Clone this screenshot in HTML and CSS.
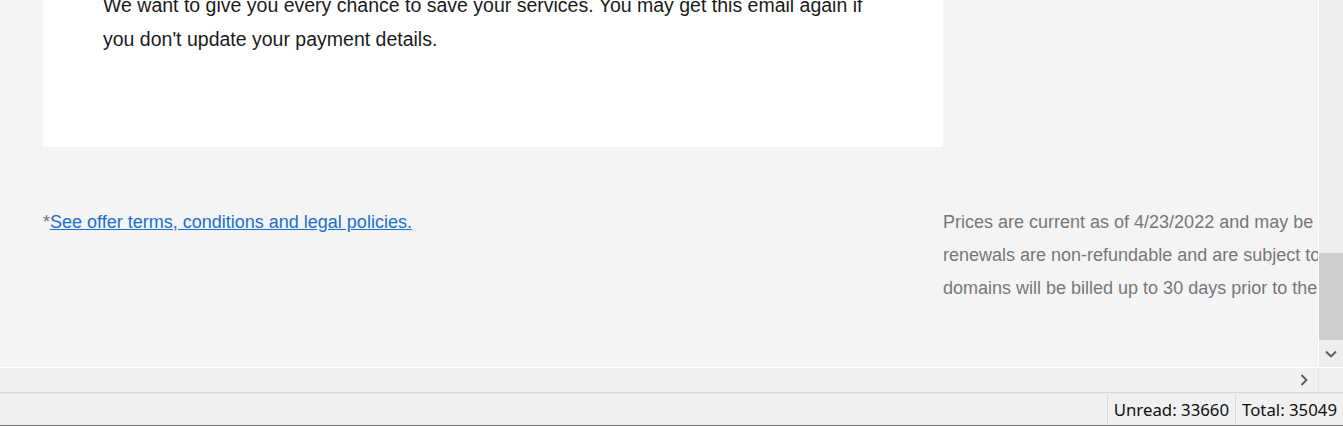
FILE: index.html
```html
<!DOCTYPE html>
<html lang="en">
<head>
    <meta charset="UTF-8">
    <meta name="viewport" content="width=device-width, initial-scale=1.0">
    <title>Payment reminder</title>
    <link rel="stylesheet" href="styles.css">
</head>
<body>
    <div class="window">
        <div class="reading">
            <div class="viewport">
                <div class="mail">
                    <div class="card">
                        <p>We want to give you every chance to save your services. You may get this email again if you don't update your payment details.</p>
                    </div>
                    <div class="footer">
                        <div class="terms">
                            <span class="star">*</span><a href="#">See offer terms, conditions and legal policies.</a>
                        </div>
                        <div class="legal">
                            <p>Prices are current as of 4/23/2022 and may be subject to change. Product<br>renewals are non-refundable and are subject to the terms in effect at renewal. Auto-renewing<br>domains will be billed up to 30 days prior to the expiration date.</p>
                        </div>
                    </div>
                </div>
            </div>
            <div class="vscroll">
                <div class="vtrack">
                    <div class="thumb"></div>
                </div>
                <div class="vbtn">
                    <svg width="12" height="8" viewBox="0 0 12 8"><path d="M1 1.5 L6 6.5 L11 1.5" fill="none" stroke="#5a5a5a" stroke-width="1.8"/></svg>
                </div>
            </div>
        </div>
        <div class="hscroll">
            <div class="htrack">
                <svg width="8" height="12" viewBox="0 0 8 12"><path d="M1.5 1 L6.5 6 L1.5 11" fill="none" stroke="#5a5a5a" stroke-width="1.8"/></svg>
            </div>
            <div class="corner"></div>
        </div>
        <div class="status">
            <div class="cell">Unread: 33660</div>
            <div class="cell">Total: 35049</div>
        </div>
    </div>
</body>
</html>
```

FILE: styles.css
```css
html, body {
    margin: 0;
    height: 100%;
}

body {
    font-family: 'Liberation Sans', Arial, sans-serif;
    background: #f0f0f0;
    overflow: hidden;
}

.window {
    display: flex;
    flex-direction: column;
    height: 426px;
}

.reading {
    display: flex;
    height: 367px;
}

.viewport {
    flex: 1;
    background: #f4f4f4;
    overflow: hidden;
    border-right: 1px solid #ffffff;
}

/* scrolled down, so the top of the card is out of view */
.mail {
    margin-top: -42px;
    padding-left: 43px;
    width: 1800px;
}

.card {
    width: 900px;
    background: #ffffff;
    padding: 30px 0 91px 60px;
    box-sizing: border-box;
}

.card p {
    margin: 0;
    width: 785px;
    font-size: 19.5px;
    line-height: 34px;
    color: #1b1b1b;
}

.footer {
    display: flex;
    padding-top: 59px;
}

.terms {
    width: 900px;
    font-size: 18px;
    line-height: 33px;
}

.star {
    color: #777777;
}

.terms a {
    color: #1a6fc9;
    text-decoration: underline;
}

.legal {
    width: 800px;
}

.legal p {
    margin: 0;
    font-size: 18px;
    line-height: 33px;
    color: #777777;
    white-space: nowrap;
}

.vscroll {
    width: 24px;
    display: flex;
    flex-direction: column;
    background: #ededed;
}

.vtrack {
    flex: 1;
    display: flex;
    flex-direction: column;
    justify-content: flex-end;
}

.thumb {
    height: 87px;
    background: #cdcdcd;
}

.vbtn {
    height: 27px;
    display: flex;
    align-items: center;
    justify-content: center;
}

.hscroll {
    display: flex;
    height: 24px;
    border-top: 1px solid #ffffff;
    border-bottom: 1px solid #d6d6d6;
}

.htrack {
    flex: 1;
    display: flex;
    align-items: center;
    justify-content: flex-end;
    padding-right: 10px;
    border-right: 1px solid #e4e4e4;
}

.corner {
    width: 24px;
}

.status {
    flex: 1;
    display: flex;
    justify-content: flex-end;
    border-top: 1px solid #e9e9e9;
    border-bottom: 1px solid #6e6e6e;
    font-family: 'Noto Sans', 'Open Sans', sans-serif;
    font-size: 16.8px;
    color: #111111;
}

.cell {
    display: flex;
    align-items: center;
    padding: 0 6px;
    border-left: 1px solid #d9d9d9;
}
```
